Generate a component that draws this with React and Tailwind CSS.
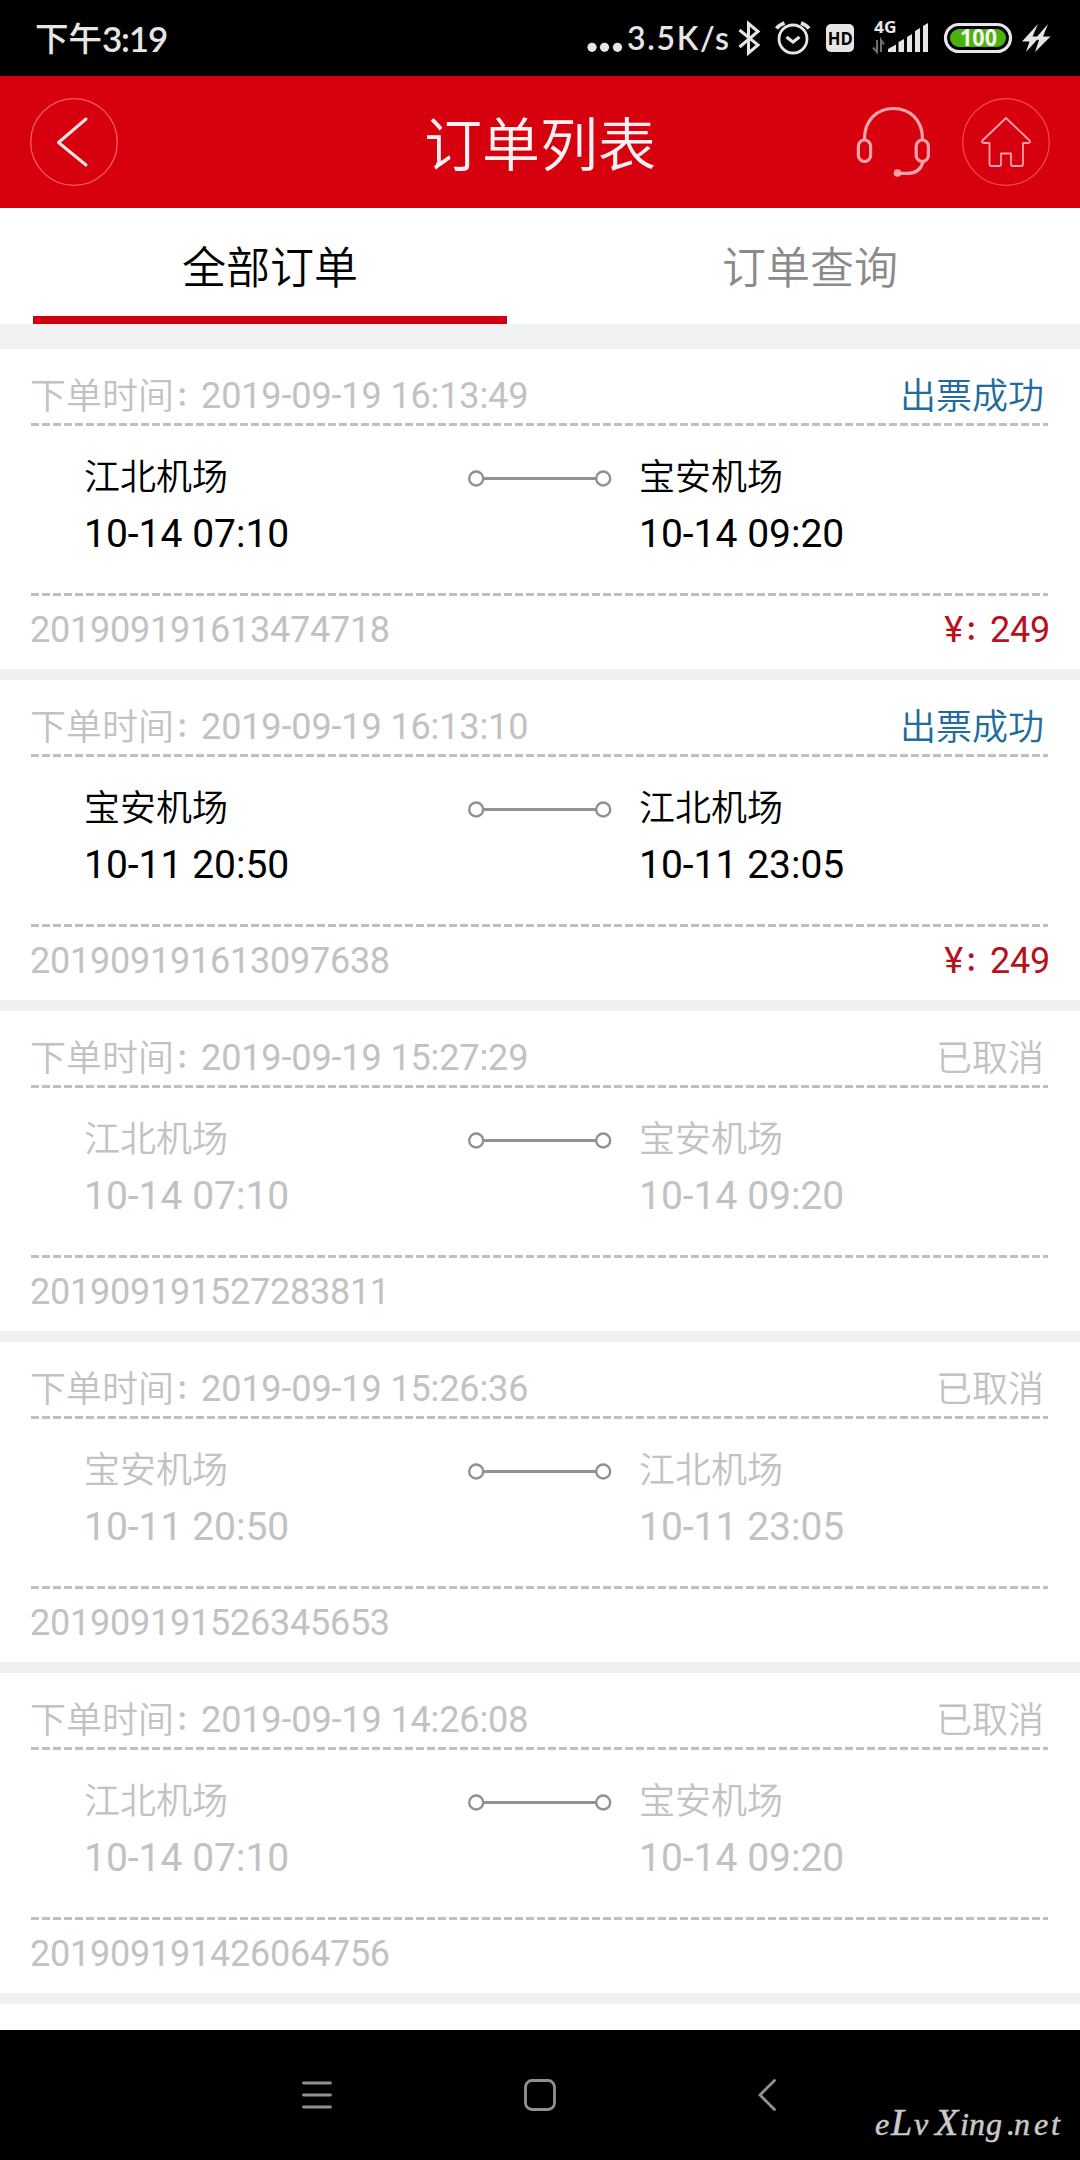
import React from 'react';

const orders = [
  { id: '201909191613474718', time: '2019-09-19 16:13:49', status: 'success', from: '江北机场', to: '宝安机场', depart: '10-14 07:10', arrive: '10-14 09:20', price: 249 },
  { id: '201909191613097638', time: '2019-09-19 16:13:10', status: 'success', from: '宝安机场', to: '江北机场', depart: '10-11 20:50', arrive: '10-11 23:05', price: 249 },
  { id: '201909191527283811', time: '2019-09-19 15:27:29', status: 'cancelled', from: '江北机场', to: '宝安机场', depart: '10-14 07:10', arrive: '10-14 09:20' },
  { id: '201909191526345653', time: '2019-09-19 15:26:36', status: 'cancelled', from: '宝安机场', to: '江北机场', depart: '10-11 20:50', arrive: '10-11 23:05' },
  { id: '201909191426064756', time: '2019-09-19 14:26:08', status: 'cancelled', from: '江北机场', to: '宝安机场', depart: '10-14 07:10', arrive: '10-14 09:20' }
];

const StatusBar = () => (
  <div className="flex h-[76px] items-start bg-black pl-[35px] text-[#e6e6e6]">
    <div className="flex h-[76px] w-[551px] items-start pt-[17px] font-['Noto_Sans_CJK_SC',sans-serif] text-[33.5px] font-medium leading-[40px]">
      下午
      <span className="font-['Lato',sans-serif] text-[35px] font-semibold leading-[43px] tracking-[-1.2px]">3:19</span>
    </div>
    <svg className="h-[76px] w-[494px]" viewBox="586 0 494 76" fill="none" stroke="#e6e6e6">
      <g fill="#e6e6e6" stroke="none">
        <circle cx="592" cy="47.3" r="4.6" />
        <circle cx="604.5" cy="47.3" r="4.6" />
        <circle cx="617.5" cy="47.3" r="4.6" />
        <text x="627" y="50" fontSize="32" fontWeight="600" textLength="102" className="font-['Lato',sans-serif]">3.5K/s</text>
      </g>

      {/* Bluetooth */}
      <path d="M739.5 30 L758 45 L748.5 53 V23.5 L758 31.5 L739.5 47" strokeWidth="3" />

      {/* Alarm */}
      <circle cx="793" cy="39" r="14" strokeWidth="2.8" />
      <path d="M786.5 37 L793 42 L799.5 37" strokeWidth="3" />
      <path d="M776.5 28.5 Q779 25 784.5 23 M809 28.5 Q806.5 25 801 23" strokeWidth="3.6" />

      {/* HD badge */}
      <rect x="826" y="24" width="28" height="28" rx="5" fill="#e6e6e6" stroke="none" />
      <text x="827.8" y="45.3" fontSize="18" fontWeight="700" textLength="25" lengthAdjust="spacingAndGlyphs" fill="#000" stroke="none" className="font-['Open_Sans',sans-serif]">HD</text>

      {/* Signal */}
      <text x="874" y="33" fontSize="16.5" fontWeight="700" textLength="22.5" lengthAdjust="spacingAndGlyphs" fill="#e6e6e6" stroke="none" className="font-['Open_Sans',sans-serif]">4G</text>
      <path d="M877 40 V52 L873 47.5 M881 52 V40 L884 44.5" stroke="#707070" strokeWidth="2" />
      <path d="M888 52 V49 L896 44.5 V52 Z M898.5 52 V42 L904 39 V52 Z M907 52 V37 L912 34 V52 Z M915 52 V31 L920 28 V52 Z M923 52 V26 L928 23 V52 Z" fill="#e6e6e6" stroke="none" />

      {/* Battery */}
      <rect x="945.5" y="24.5" width="65" height="27" rx="13.5" strokeWidth="3.2" />
      <rect x="950" y="29" width="56" height="18" rx="9" fill="#4bb20c" stroke="none" />
      <text x="960" y="46" fontSize="23" fontWeight="700" textLength="37" lengthAdjust="spacingAndGlyphs" fill="#f2f2f2" stroke="none" className="font-['Open_Sans',sans-serif]">100</text>
      <path d="M1038 24 L1022 41.5 H1029.5 L1026 52 L1040 36.5 H1032.5 Z M1048 24 L1035 39 L1039 40 L1035 52 L1050.5 36.5 H1043 Z" fill="#e6e6e6" stroke="none" />
    </svg>
  </div>
);

const Header = () => (
  <div className="flex h-[132px] items-center justify-between bg-[#d7000f] px-[30px]">
    <svg className="h-[88px] w-[208px]" viewBox="0 0 208 88" fill="none" stroke="#fff">
      <circle cx="44" cy="44" r="43.3" stroke="#ff5c66" strokeWidth="1.3" />
      <path d="M56 21 L28.5 44.5 L56 67" stroke="#ffe3e5" strokeWidth="3" strokeLinecap="round" strokeLinejoin="round" />
    </svg>
    <h1 className="pt-[7px] text-[58px] font-[350] leading-[60px] text-[#fff0f2]">订单列表</h1>
    <div className="flex w-[208px] items-center justify-end gap-8">
      <svg className="h-[88px] w-[74px]" viewBox="0 0 74 88" fill="none" stroke="#ffa3aa" strokeWidth="3.2">
        <path d="M8.5 41 C8.5 22 21 10.5 37.5 10.5 S66.5 22 66.5 41" />
        <rect x="2.4" y="42" width="12.2" height="21.5" rx="6.1" />
        <rect x="60.2" y="42" width="12.2" height="21.5" rx="6.1" />
        <path d="M67 64 C65 71 60 75.3 52 75.3 H41" />
        <circle cx="41.5" cy="75" r="3.8" fill="#ffa3aa" stroke="none" />
      </svg>
      <svg className="h-[88px] w-[88px]" viewBox="0 0 88 88" fill="none">
        <circle cx="44" cy="44" r="43.3" stroke="#ff4754" strokeWidth="1.2" />
        <path
          d="M44 20 L20.5 42.5 Q19 45 22 45 H27.5 V66 Q27.5 68 29.5 68 H37.5 Q39 68 39 66 V55.5 H49 V66 Q49 68 51 68 H59 Q61 68 61 66 V45 H66 Q69 45 67.5 42.5 Z"
          stroke="#ffa3aa"
          strokeWidth="1.8"
          strokeLinejoin="round"
        />
      </svg>
    </div>
  </div>
);

const Tabs = () => (
  <div className="grid h-[116px] grid-cols-2 px-[33px] text-center text-[44px] font-[350] leading-[44px]">
    <div className="mr-[33px] border-b-8 border-[#d0000f] pt-[39px] text-black">全部订单</div>
    <div className="ml-[33px] pt-[39px] text-[#8a8a8a]">订单查询</div>
  </div>
);

const Dashes = () => (
  <div className="ml-[31px] mr-8 h-[3px] bg-[repeating-linear-gradient(90deg,#c0c0c0_0_8px,transparent_8px_11px)]" />
);

const RouteLine = () => (
  <svg className="mt-[10px] h-[18px] w-36" viewBox="0 0 144 18" fill="none" stroke="#919191">
    <circle cx="8.2" cy="9.5" r="7" strokeWidth="2.4" />
    <circle cx="135.2" cy="9.5" r="7" strokeWidth="2.4" />
    <path d="M15.5 9.5 H128" strokeWidth="2.8" />
  </svg>
);

const Colon = () => (
  <span className="inline-block w-[27px] pl-0.5 pt-px text-[25px] font-bold">：</span>
);

const OrderCard = ({ order }) => {
  const success = order.status === 'success';

  return (
    <div className="border-b-[11px] border-[#f0f0f0] bg-white text-[36px] leading-[36px] text-[#c2c2c2]">
      <div className="flex h-[74px] justify-between pl-[30px] pr-9 pt-[29px]">
        <div className="flex whitespace-nowrap">
          <span className="pt-px font-[350]">下单时间</span>
          <Colon />
          <span className="tracking-[-0.12px]">{order.time}</span>
        </div>
        <div className={`pt-px font-[350] ${success ? 'text-[#216c9c]' : 'text-[#c2c2c2]'}`}>
          {success ? '出票成功' : '已取消'}
        </div>
      </div>

      <Dashes />

      {/* Route */}
      <div className={`flex h-[167px] pl-[84px] pt-[33px] ${success ? 'text-black' : 'text-[#c2c2c2]'}`}>
        <div className="w-96">
          <p className="pt-px font-[350]">{order.from}</p>
          <p className="mt-[18px] text-[39px] leading-[40px]">{order.depart}</p>
        </div>
        <RouteLine />
        <div className="ml-[27px]">
          <p className="pt-px font-[350]">{order.to}</p>
          <p className="mt-[18px] text-[39px] leading-[40px]">{order.arrive}</p>
        </div>
      </div>

      <Dashes />

      <div className="flex h-[73px] justify-between pl-[30px] pr-[30px] pt-4">
        <span className="tracking-[-0.24px]">{order.id}</span>
        {order.price && (
          <span className="flex tracking-[-0.24px] text-[#b5121b]">
            ¥<Colon />{order.price}
          </span>
        )}
      </div>
    </div>
  );
};

const NavBar = () => (
  <div className="relative flex h-[130px] items-start bg-black pl-[301px] pt-12">
    <svg className="h-9 w-[480px]" viewBox="301 2078 480 36" fill="none" stroke="#919191" strokeWidth="2.8" strokeLinecap="round">
      <path d="M303.5 2083 H330.5 M303.5 2095 H330.5 M303.5 2107 H330.5" />
      <rect x="525.5" y="2080.5" width="29" height="29" rx="6.5" />
      <path d="M774.5 2080.5 L760 2095 L774.5 2109.5" />
    </svg>
    {/* Site mark */}
    <svg className="absolute right-0 top-[60px] h-[70px] w-[220px]" viewBox="860 2090 220 70">
      <text
        x="875 891 914 935 960 969 986 1007 1014 1034 1051"
        y="2135"
        fontSize="32"
        fill="#c9c9c9"
        stroke="#c9c9c9"
        strokeWidth="0.5"
        fontStyle="italic"
        className="font-['Liberation_Serif',cursive]"
      >
        e<tspan fontSize="38">L</tspan>v<tspan fontSize="38">X</tspan>ing.net
      </text>
    </svg>
  </div>
);

const App = () => {
  return (
    <div className="flex h-[2160px] w-[1080px] flex-col overflow-hidden bg-white font-['Roboto','Noto_Sans_CJK_SC',sans-serif]" lang="zh-CN">
      <StatusBar />
      <Header />
      <Tabs />
      <div className="h-[25px] bg-[#eff1f2]" />
      <div className="flex-1">
        {orders.map((order) => (
          <OrderCard key={order.id} order={order} />
        ))}
      </div>
      <NavBar />
    </div>
  );
};

export default App;
